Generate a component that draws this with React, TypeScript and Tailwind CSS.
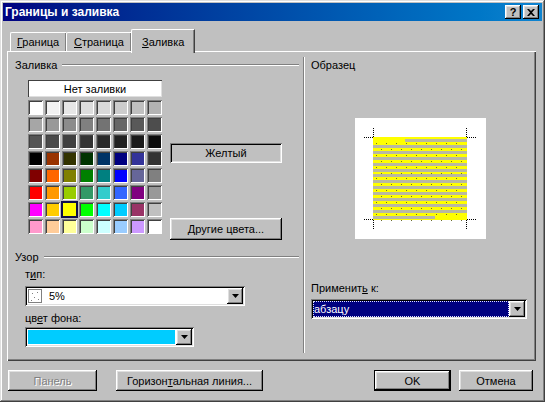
import React from "react";

const raised =
  "shadow-[inset_-1px_-1px_#000000,inset_1px_1px_#ffffff,inset_-2px_-2px_#808080,inset_2px_2px_#dfdfdf]";
const sunken =
  "shadow-[inset_1px_1px_#808080,inset_-1px_-1px_#ffffff,inset_2px_2px_#000000,inset_-2px_-2px_#dfdfdf]";

const palette = [
  ["#ffffff", "#f2f2f2", "#e6e6e6", "#dddddd", "#d9d9d9", "#cccccc", "#c0c0c0", "#b3b3b3"],
  ["#a6a6a6", "#999999", "#8c8c8c", "#808080", "#737373", "#666666", "#595959", "#4d4d4d"],
  ["#555555", "#4a4a4a", "#404040", "#333333", "#2a2a2a", "#222222", "#1a1a1a", "#0d0d0d"],
  ["#000000", "#993300", "#333300", "#003300", "#003366", "#000080", "#333399", "#333333"],
  ["#800000", "#ff6600", "#808000", "#008000", "#008080", "#0000ff", "#666699", "#808080"],
  ["#ff0000", "#ff9900", "#99cc00", "#339966", "#33cccc", "#3366ff", "#800080", "#999999"],
  ["#ff00ff", "#ffcc00", "#ffff00", "#00ff00", "#00ffff", "#00ccff", "#993366", "#c0c0c0"],
  ["#ff99cc", "#ffcc99", "#ffff99", "#ccffcc", "#ccffff", "#99ccff", "#cc99ff", "#ffffff"],
];

function Arrow() {
  return (
    <div className={`w-[16px] h-[16px] bg-[#c0c0c0] flex items-center justify-center shrink-0 ${raised}`}>
      <svg width="7" height="4" viewBox="0 0 7 4">
        <polygon points="0,0 7,0 3.5,4" fill="#000" />
      </svg>
    </div>
  );
}

function GroupLabel({ children, className = "" }: { children: React.ReactNode; className?: string }) {
  return (
    <div className={`flex items-center h-[14px] ${className}`}>
      <span className="leading-[14px]">{children}</span>
      <div className="flex-1 ml-[5px] h-[2px] border-t border-t-[#808080] border-b border-b-white" />
    </div>
  );
}

function Preview() {
  const lines = [];
  for (let i = 0; i < 14; i++) {
    const y = Math.round(21 + i * 5.9);
    const x = i === 0 ? 50 : 18;
    const w = i === 0 ? 62 : i === 13 ? 62 : 94;
    lines.push(<rect key={i} x={x} y={y} width={w} height={3} fill="#b8b8a2" />);
  }
  const dots = [];
  for (let r = 0; r < 14; r++) {
    const y = Math.round(24 + r * 5.9) + 1;
    for (let c = 0; c < 10; c++) {
      const x = 21 + c * 10 + (r % 2 ? 5 : 0);
      if (x < 111) dots.push(<rect key={`${r}-${c}`} x={x} y={y} width={1} height={1} fill="#6b6b30" />);
    }
  }
  return (
    <svg width="131" height="121" className="block">
      <rect width="131" height="121" fill="#ffffff" />
      <rect x="18" y="19" width="94" height="83" fill="#ffff00" />
      {lines}
      {dots}
      <g stroke="#000" strokeWidth="1" strokeDasharray="1 1" fill="none">
        <line x1="18.5" y1="10" x2="18.5" y2="19" />
        <line x1="9" y1="19.5" x2="18" y2="19.5" />
        <line x1="111.5" y1="10" x2="111.5" y2="19" />
        <line x1="112" y1="19.5" x2="121" y2="19.5" />
        <line x1="18.5" y1="102" x2="18.5" y2="111" />
        <line x1="9" y1="101.5" x2="18" y2="101.5" />
        <line x1="111.5" y1="102" x2="111.5" y2="111" />
        <line x1="112" y1="101.5" x2="121" y2="101.5" />
      </g>
    </svg>
  );
}

export default function App() {
  return (
    <div className="w-[545px] h-[402px] bg-[#c0c0c0] overflow-hidden font-['Liberation_Sans',Arial,sans-serif] text-[11px] leading-[14px] text-black shadow-[inset_-1px_-1px_#404040,inset_1px_1px_#dfdfdf,inset_-2px_-2px_#808080,inset_2px_2px_#ffffff] pt-[3px] px-[3px]">
      {/* title bar */}
      <div className="h-[18px] flex items-center bg-gradient-to-r from-[#000080] to-[#1084d0] pl-[2px] pr-[3px]">
        <span className="text-white font-bold text-[12px] leading-[16px]">Границы и заливка</span>
        <div className="flex-1" />
        <div className={`w-[16px] h-[14px] bg-[#c0c0c0] flex items-center justify-center font-bold text-[11px] leading-[12px] ${raised}`}>?</div>
        <div className={`ml-[2px] w-[16px] h-[14px] bg-[#c0c0c0] flex items-center justify-center ${raised}`}>
          <svg width="8" height="7" viewBox="0 0 8 7">
            <path d="M0 0 L2 0 L4 2 L6 0 L8 0 L5 3.5 L8 7 L6 7 L4 5 L2 7 L0 7 L3 3.5 Z" fill="#000" />
          </svg>
        </div>
      </div>

      {/* tabs */}
      <div className="h-[30px] flex items-end pl-[7px]">
        <div className="w-[56px] h-[19px] border-t border-l border-white rounded-tl-[2px] shadow-[inset_-1px_0_#808080] pt-[2px] pl-[6px]">
          <span className="underline">Г</span>раница
        </div>
        <div className="w-[66px] h-[19px] border-t border-l border-white rounded-tl-[2px] border-r border-r-[#404040] shadow-[inset_-1px_0_#808080] pt-[2px] pl-[7px]">
          <span className="underline">С</span>траница
        </div>
        <div className="relative z-10 -ml-[1px] -mb-[2px] w-[64px] h-[24px] bg-[#c0c0c0] border-t border-l border-white rounded-tl-[2px] border-r border-r-[#404040] shadow-[inset_-1px_0_#808080] pt-[5px] pl-[10px]">
          <span className="underline">З</span>аливка
        </div>
      </div>

      {/* panel */}
      <div className="ml-[4px] w-[529px] h-[310px] flex shadow-[inset_1px_1px_#ffffff,inset_-1px_-1px_#404040,inset_-2px_-2px_#808080]">
        {/* left column */}
        <div className="w-[296px] pl-[8px] pt-[7px] pr-[4px]">
          <GroupLabel>Заливка</GroupLabel>
          <div className="flex mt-[8px]">
            <div className="ml-[13px] flex flex-col">
              <div className="w-[134px] h-[17px] bg-white flex items-center justify-center shadow-[inset_1px_1px_#404040,inset_-1px_-1px_#dfdfdf]">
                Нет заливки
              </div>
              <div className="mt-[3px] grid grid-cols-8 gap-[2px]">
                {palette.flatMap((row, r) =>
                  row.map((c, i) =>
                    r === 6 && i === 2 ? (
                      <div key={`${r}-${i}`} className="w-[15px] h-[15px] shadow-[0_0_0_1px_#10104a,inset_0_0_0_1px_#10104a]" style={{ backgroundColor: c }} />
                    ) : (
                      <div key={`${r}-${i}`} className="w-[15px] h-[15px] p-[1px] bg-[#dfdfdf] shadow-[inset_1px_1px_#808080,inset_-1px_-1px_#ffffff]">
                        <div className="w-full h-full shadow-[inset_1px_1px_#404040]" style={{ backgroundColor: c }} />
                      </div>
                    )
                  )
                )}
              </div>
            </div>
            <div className="ml-[8px] flex flex-col">
              <div className={`mt-[63px] w-[112px] h-[20px] flex items-center justify-center ${sunken}`}>Желтый</div>
              <div className={`mt-[55px] w-[112px] h-[22px] flex items-center justify-center ${raised}`}>
                <span>
                  <span className="underline">Д</span>ругие цвета...
                </span>
              </div>
            </div>
          </div>
          <GroupLabel className="mt-[10px]">Узор</GroupLabel>
          <div className="ml-[10px] mt-[3px] h-[14px]">
            т<span className="underline">и</span>п:
          </div>
          <div className={`ml-[10px] mt-[5px] w-[220px] h-[20px] bg-white p-[2px] flex items-center ${sunken}`}>
            <div className="ml-[1px] w-[14px] h-[14px] border border-[#808080] bg-white relative">
              <div className="absolute left-[3px] top-[3px] w-[1px] h-[1px] bg-[#808080]" />
              <div className="absolute left-[8px] top-[2px] w-[1px] h-[1px] bg-[#808080]" />
              <div className="absolute left-[5px] top-[7px] w-[1px] h-[1px] bg-[#808080]" />
              <div className="absolute left-[2px] top-[10px] w-[1px] h-[1px] bg-[#808080]" />
              <div className="absolute left-[9px] top-[9px] w-[1px] h-[1px] bg-[#808080]" />
            </div>
            <span className="ml-[7px] flex-1">5%</span>
            <Arrow />
          </div>
          <div className="ml-[10px] mt-[5px] h-[14px]">
            цв<span className="underline">е</span>т фона:
          </div>
          <div className={`ml-[10px] mt-[2px] w-[169px] h-[20px] bg-white p-[2px] flex items-stretch ${sunken}`}>
            <div className="flex-1 m-[1px] bg-[#00ccff]" />
            <Arrow />
          </div>
        </div>

        {/* right column */}
        <div className="mt-[6px] h-[296px] w-[220px] border-l border-l-[#808080] shadow-[inset_1px_0_#ffffff] pl-[7px] pt-[1px]">
          <div className="h-[14px]">Образец</div>
          <div className="ml-[44px] mt-[46px]">
            <Preview />
          </div>
          <div className="mt-[42px] h-[14px]">
            Применит<span className="underline">ь</span> к:
          </div>
          <div className={`mt-[4px] w-[216px] h-[20px] bg-white p-[2px] flex items-stretch ${sunken}`}>
            <div className="flex-1 bg-[#000080] text-white leading-[16px] pl-[1px] outline outline-1 outline-dotted outline-[#e0e0ff] -outline-offset-1">
              абзацу
            </div>
            <Arrow />
          </div>
        </div>
      </div>

      {/* bottom buttons */}
      <div className="mt-[9px] flex h-[21px] pl-[5px]">
        <div className={`w-[89px] flex items-center justify-center text-[#808080] [text-shadow:1px_1px_#ffffff] ${raised}`}>Панель</div>
        <div className={`ml-[19px] w-[147px] flex items-center justify-center ${raised}`}>
          <span>
            Горизон<span className="underline">т</span>альная линия...
          </span>
        </div>
        <div className={`ml-[111px] w-[77px] border border-black flex items-center justify-center ${raised}`}>OK</div>
        <div className={`ml-[8px] w-[74px] flex items-center justify-center ${raised}`}>Отмена</div>
      </div>
    </div>
  );
}
